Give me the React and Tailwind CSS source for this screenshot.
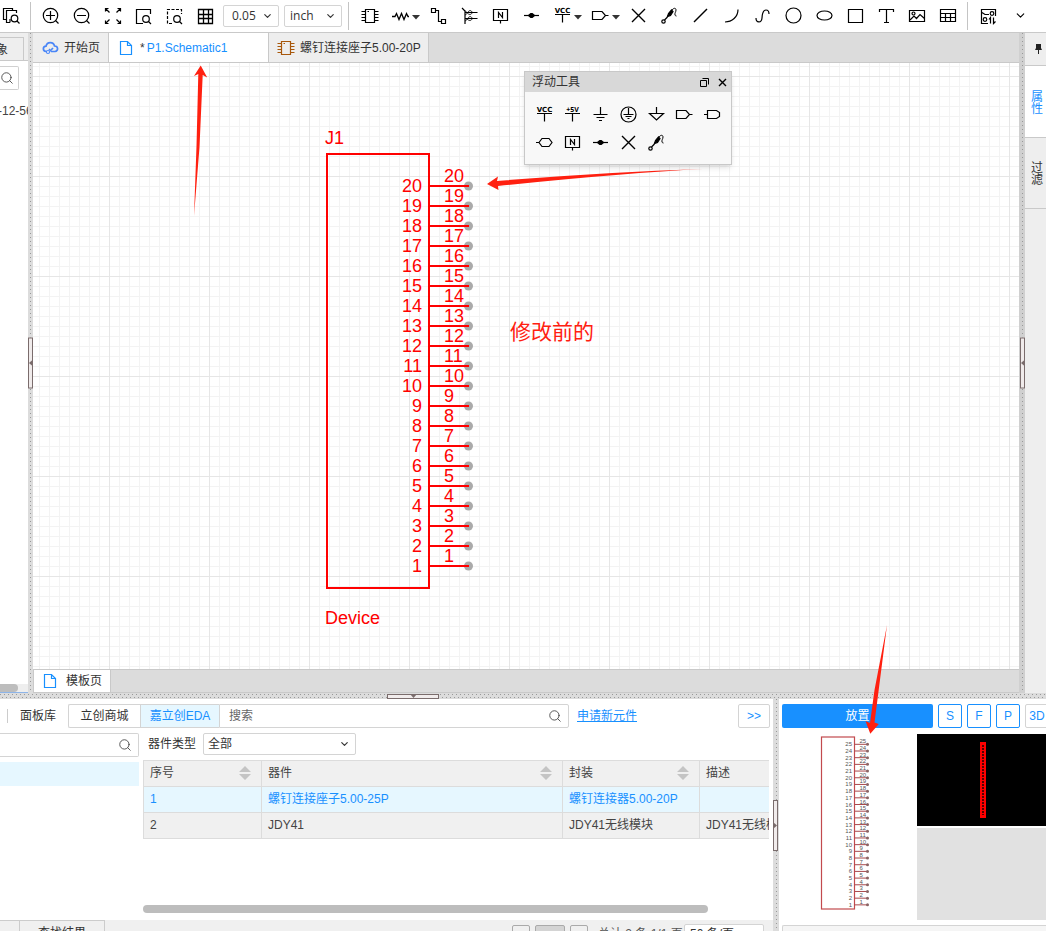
import { ChevronDown, Search } from 'lucide-react'

const DOTS_V = 'bg-[repeating-linear-gradient(to_bottom,#999_0_1px,transparent_1px_4px)] bg-[length:1px_100%] bg-center bg-no-repeat'
const DOTS_H = 'bg-[repeating-linear-gradient(to_right,#999_0_1px,transparent_1px_4px),repeating-linear-gradient(to_right,#999_0_1px,transparent_1px_4px)] bg-[length:100%_1px] bg-[position:0_1px,2px_4px] bg-no-repeat'

const Icon = ({ children, color = 'currentColor' }) => (
  <svg width="21" height="21" viewBox="0 0 21 21" fill="none" stroke={color} strokeWidth="1.2" className="shrink-0">
    {children}
  </svg>
)

const icons = {
  copySearch: (
    <>
      <path d="M5.500 14.500H2.500V3.500H11.500V5.500M9 17.500H5.500V5.500H15.500V8" />
      <circle cx="13.5" cy="13.500" r="3.300" />
      <path d="M16 16l2.500 2.500M9 14v3.500" />
    </>
  ),
  zoomIn: <><circle cx="10.5" cy="10.500" r="7.200" /><path d="M6 10.500h9M10.500 6v9M15.500 15.500l3 3" /></>,
  zoomOut: <><circle cx="10.5" cy="10.500" r="7.200" /><path d="M6 10.500h9M15.500 15.500l3 3" /></>,
  fit: (
    <path d="M3.500 6.500v-3h3M3.500 3.500l4 4M15.500 3.500h3v3M18.500 3.500l-4 4M3.500 15.500v3h3M3.500 18.500l4-4M15.500 18.500h3v-3M18.500 18.500l-4-4" />
  ),
  zoomRegion: (
    <>
      <path d="M8 18.500H3.500V4.500H17.500V9" />
      <circle cx="13" cy="14" r="3.300" />
      <path d="M15.500 16.500l2.500 2.500M8 18.500h2" />
    </>
  ),
  zoomSelect: (
    <>
      <path d="M8 18.500H3.500V4.500H17.500V9" strokeDasharray="3 1.500" />
      <circle cx="13" cy="14" r="3.300" />
      <path d="M15.500 16.500l2.500 2.500" />
    </>
  ),
  grid: <path d="M3.500 4.500h14v14h-14zM8.500 4v15M13.500 4v15M3 9.500h15M3 13.500h15" strokeWidth="1.300" />,
  chip: (
    <>
      <path d="M6.500 4.500h9v13h-9z" />
      <path d="M2.500 6.500h4M2.500 9.500h4M2.500 12.500h4M2.500 15.500h4M15.500 6.500h4M15.500 9.500h4M15.500 12.500h4M15.500 15.500h4" />
      <path d="M8.500 6.500h1.500" />
    </>
  ),
  resistor: <path d="M2 11.500h3l1.500-3 2.500 6 2.500-6 2.500 6 2.500-6 1.500 3h1" strokeWidth="1.300" />,
  wire: <path d="M3.500 3.500h4v4h-4zM13.500 14.500h4v4h-4zM7.500 5.500h3v11h3" />,
  bus: (
    <>
      <path d="M3 3l3 3v13M6 7.500h12.500M6 13.500h12.500" />
      <path d="M6 10c2 0 3-4.500 5-4.500 1.500 0 2 2 3 2-1 0-1.500 2-3 2-2 0-3-2-5-4M6 16c2 0 3-4.500 5-4.500 1.500 0 2 2 3 2-1 0-1.500 2-3 2-2 0-3-2-5-2" strokeWidth=".8" />
    </>
  ),
  netLabel: (
    <>
      <path d="M3.500 4.500h14v11h-14zM10.500 15.500v3" />
      <path d="M8.500 13V7.500l4 5V7" />
    </>
  ),
  junction: <><path d="M3 10.500h15" /><path d="M6.500 10.500l3-2.500h2l3 2.500-3 2.500h-2z" fill="currentColor" stroke="none" /></>,
  vcc: (
    <>
      <path d="M3 9.500h15M10.500 9.500v8" />
      <text x="10.500" y="7.500" textAnchor="middle" fontSize="7" fontWeight="700" fill="currentColor" stroke="none" className="font-['DejaVu_Sans']">VCC</text>
    </>
  ),
  fiveV: (
    <>
      <path d="M3 9.500h15M10.500 9.500v8" />
      <text x="10.500" y="7.500" textAnchor="middle" fontSize="7" fontWeight="700" fill="currentColor" stroke="none" className="font-['Open_Sans']">+5V</text>
    </>
  ),
  ground: <path d="M10.500 3v8M3.500 10.500h14M6.500 13.500h8M9 16.500h3" />,
  earth: <><circle cx="10.500" cy="10.500" r="7.500" /><path d="M10.500 4v6M5.500 10.500h10M7.500 12.500h6M9.500 14.500h2" /></>,
  gndArrow: <path d="M10.500 3v7M3.500 9.500h14l-7 6.500z" />,
  portOut: <path d="M2.500 6.500h9.500l3.500 4-3.500 4H2.500zM15.500 10.500h3" />,
  portIn: <path d="M5.500 6.500h9l3 2v4l-3 2h-9zM2 10.500h3.500" />,
  portBi: <path d="M2 10.500h3M5 10.500l3-4h7l3 4-3 4H8z" />,
  cross: <path d="M4 4l13 13M17 4L4 17" strokeWidth="1.400" />,
  probe: (
    <>
      <circle cx="4.500" cy="16.500" r="1.700" />
      <path d="M5.500 15l3-3" />
      <path d="M8.500 11.500l1-3 3-3.500 1.500 1.500-2.500 4z" fill="currentColor" />
      <path d="M13 5c2-2.500 4-2 4 0s-1.500 3-1 5c.5 1 1 1 1.500 1" strokeWidth="1" />
    </>
  ),
  line: <path d="M4 17L17 4" strokeWidth="1.500" />,
  arc: <path d="M4 17c7 0 13-5 13-12.500" />,
  spline: <path d="M4 13c0 5 5.500 5.500 6 0 0-3 1-8 4-8 2.500 0 3 2 3 4" />,
  circle: <circle cx="10.500" cy="10.500" r="7.500" />,
  ellipse: <ellipse cx="10.500" cy="10.500" rx="7.500" ry="4.500" />,
  rect: <path d="M3.500 4.500h14v13h-14z" />,
  text: <path d="M3.500 7V4.500h14V7M10.500 4.500v13M8 17.500h5" />,
  image: (
    <>
      <path d="M2.500 5.500h15v11h-15z" />
      <circle cx="6.500" cy="8.500" r="1.500" />
      <path d="M3 15l4-4 2.500 2.500L13 9.500l4.500 4" />
    </>
  ),
  table: <path d="M2.500 4.500h15v12h-15zM2.500 8.500h15M2.500 12.500h15M7.500 8.500v8M12.500 8.500v8" />,
  convert: (
    <>
      <path d="M10 18.500H3.500V4.500H17.500V11M4 7.500l3 2h4M3 18.500h7" />
      <circle cx="14" cy="8.500" r="1.800" />
      <circle cx="7" cy="14.500" r="1.800" />
      <path d="M12.500 18.500v-6l-1.500 2M15.500 12.500v6l2-2" />
    </>
  ),
}

const Caret = () => (
  <svg width="8" height="5" viewBox="0 0 8 5" className="mt-1 shrink-0"><path d="M0 0h8L4 4.500z" fill="#333" /></svg>
)

const Tool = ({ name, menu }) => (
  <button type="button" aria-label={name} className={menu ? 'flex h-[31px] w-[38px] items-center gap-px pl-[5px]' : 'flex h-[31px] w-[31px] items-center justify-center'}>
    <Icon>{icons[name]}</Icon>
    {menu && <Caret />}
  </button>
)

const Dropdown = ({ label, value, className, font = '' }) => (
  <div className={`relative shrink-0 ${className}`}>
    <select aria-label={label} id={label} defaultValue={value} className={`h-full w-full appearance-none rounded-xs border border-[#d4d4d4] bg-white text-[#333] outline-none ${font}`}>
      <option>{value}</option>
    </select>
    <ChevronDown size={11} strokeWidth={2.5} className="pointer-events-none absolute top-1/2 right-[6px] -translate-y-1/2 text-[#333]" />
  </div>
)

const FileIcon = () => (
  <svg width="14" height="16" viewBox="0 0 14 16" fill="none" stroke="#1890ff" strokeWidth="1.200" className="shrink-0">
    <path d="M1.500 1.500h7l4 4v9h-11zM8.500 1.500v4h4" />
  </svg>
)

const CloudIcon = () => (
  <svg width="17" height="14" viewBox="0 0 17 14" fill="none" stroke="#4a86f7" strokeWidth="1.700" className="shrink-0">
    <path d="M5 10.500H4C.5 10 .5 5.500 4 5.200 5 .500 11.500.500 12.500 5c4 0 4 5 .5 5.500H9.500L7 8" />
    <circle cx="6" cy="11" r="1.500" fill="#fff" strokeWidth="1.200" />
    <path d="M9 9l2-2" />
  </svg>
)

const Toolbar = () => (
  <header className="flex h-[33px] shrink-0 items-center overflow-hidden border-b border-[#c9c9c9] bg-white pb-px text-black">
    <div className="flex w-[22px] justify-center"><Icon>{icons.copySearch}</Icon></div>
    <i className="ml-2 h-7 w-px bg-[#c4c4c4]" />
    <div className="ml-1 flex shrink-0">
      {['zoomIn', 'zoomOut', 'fit', 'zoomRegion', 'zoomSelect', 'grid'].map((n) => <Tool key={n} name={n} />)}
    </div>
    <Dropdown label="grid-size" value="0.05" className="ml-[2px] h-[22px] w-14" font="pl-2 font-['Open_Sans'] text-xs" />
    <Dropdown label="unit" value="inch" className="ml-[5px] h-[22px] w-[58px]" font="pl-[5px] font-['Open_Sans'] text-xs" />
    <i className="ml-[6px] h-7 w-px bg-[#c4c4c4]" />
    <div className="ml-[5px] flex shrink-0">
      <Tool name="chip" />
      <Tool name="resistor" menu />
      {['wire', 'bus', 'netLabel', 'junction'].map((n) => <Tool key={n} name={n} />)}
      <Tool name="vcc" menu />
      <Tool name="portOut" menu />
      {['cross', 'probe', 'line', 'arc', 'spline', 'circle', 'ellipse', 'rect', 'text', 'image', 'table'].map((n) => <Tool key={n} name={n} />)}
    </div>
    <i className="ml-[3px] h-7 w-px bg-[#c4c4c4]" />
    <div className="ml-[5px] flex shrink-0 items-center">
      <Tool name="convert" />
      <button type="button" aria-label="more" className="flex w-8 justify-center"><ChevronDown size={13} strokeWidth={2} /></button>
    </div>
  </header>
)

const PINS = Array.from({ length: 20 }, (_, i) => 20 - i)
const PREVIEW_PINS = Array.from({ length: 25 }, (_, i) => 25 - i)

const Schematic = () => (
  <svg width="100%" height="100%" className="block">
    <defs>
      <pattern id="minor" x="6" y="3" width="10" height="10" patternUnits="userSpaceOnUse">
        <path d="M.5 0v10M0 .5h10" stroke="#f3f3f3" />
      </pattern>
      <pattern id="major" x="76" y="13" width="100" height="100" patternUnits="userSpaceOnUse">
        <path d="M.5 0v100M0 .5h100" stroke="#e6e6e6" />
      </pattern>
    </defs>
    <rect width="100%" height="100%" fill="url(#minor)" />
    <rect width="100%" height="100%" fill="url(#major)" />
    <g fill="#f00" fontSize="18">
      <text x="292" y="81">J1</text>
      <rect x="294" y="91" width="102" height="434" fill="none" stroke="#f00" strokeWidth="2" />
      {PINS.map((n, i) => {
        const y = 123 + i * 20
        return (
          <g key={n}>
            <circle cx="435.500" cy={y} r="4.500" fill="#aaa" />
            <path d={`M396 ${y}h40`} stroke="#f00" strokeWidth="2" />
            <text x="389" y={y + 6} textAnchor="end">{n}</text>
            <text x="411" y={y - 4}>{n}</text>
          </g>
        )
      })}
      <text x="292" y="561">Device</text>
      <text x="477" y="276" fontSize="21" fill="#ff2010">修改前的</text>
    </g>
    <g fill="#ff2010">
      <path d="M161 153l2.500-70 1.800-72-4.300 2 6.700-10.500 6.500 12-4.500-2.500-3.200 72z" />
      <path d="M670 106q-80 4-205 17l.5 4-11.500-6 11-7.500-1 4.500q110-9 206-12z" />
    </g>
  </svg>
)

const FloatingTools = () => (
  <section className="absolute top-2 left-[491px] flex h-[94px] w-52 flex-col border border-[#c8c8c8] bg-[#f8f8f8] text-black shadow-md">
    <div className="flex h-5 items-center bg-[#d8d8d8] pr-1 pl-[7px] text-[#333]">
      <span className="flex-1">浮动工具</span>
      <button type="button" aria-label="restore" className="mr-2 text-black">
        <svg width="11" height="11" viewBox="0 0 11 11" fill="none" stroke="currentColor" strokeWidth="1"><path d="M1.500 3.500h6v6h-6zM3.500 1.500h6v6" /></svg>
      </button>
      <button type="button" aria-label="close" className="text-black">
        <svg width="9" height="9" viewBox="0 0 9 9" stroke="currentColor" strokeWidth="1.400"><path d="M1 1l7 7M8 1L1 8" /></svg>
      </button>
    </div>
    <div className="grid grid-cols-[repeat(7,28px)] pt-2 pl-[5px]">
      {['vcc', 'fiveV', 'ground', 'earth', 'gndArrow', 'portOut', 'portIn', 'portBi', 'netLabel', 'junction', 'cross', 'probe'].map((n) => (
        <button key={n} type="button" aria-label={n} className="flex h-7 items-start pt-1 pl-1"><Icon>{icons[n]}</Icon></button>
      ))}
    </div>
  </section>
)

const LeftPanel = () => (
  <aside className="flex w-7 shrink-0 flex-col overflow-hidden bg-white">
    <div className="h-7 shrink-0 border-b border-[#c9c9c9] bg-[#eee] pt-1">
      <button type="button" className="flex h-6 w-6 items-center justify-end border-t border-r border-[#c9c9c9] pr-[15px]">象</button>
    </div>
    <div className="mt-[5px] flex h-6 w-[19px] shrink-0 items-center rounded-r-xs border border-l-0 border-[#d0d0d0]">
      <input aria-label="筛选" className="h-full w-0" />
      <Search size={14} strokeWidth={1.5} className="shrink-0 text-[#444]" />
    </div>
    <p className="mt-[13px] -ml-[2px] flex-1 whitespace-nowrap text-[#444]">-12-56</p>
    <div className="h-[9px] shrink-0 border-b border-[#8db4e8] bg-[#eee]"><div className="h-2 w-[18px] rounded-r-full bg-[#bdbdbd]" /></div>
  </aside>
)

const Handle = ({ dir, className }) => (
  <div className={`absolute flex items-center justify-center border border-[#7a6c6c] bg-[#f0ebeb] ${className}`}>
    <svg width="5" height="7" viewBox="0 0 5 7" className={dir === 'down' ? 'shrink-0 rotate-270' : dir === 'right' ? 'shrink-0 rotate-180' : 'shrink-0'}>
      <path d="M5 0v7L1 3.500z" fill="#7a6c6c" />
    </svg>
  </div>
)

const Workspace = () => (
  <main className="flex min-w-0 flex-1 flex-col">
    <nav className="flex h-[30px] shrink-0 border-b border-[#c9c9c9] bg-[#dcdcdc]">
      <button type="button" className="flex w-[76px] items-center gap-[5px] border-r border-[#c9c9c9] bg-[#eee] pl-[9px]"><CloudIcon />开始页</button>
      <button type="button" className="flex w-40 items-center gap-[7px] border-r border-[#c9c9c9] bg-white pl-[10px] text-[#1890ff]">
        <FileIcon />
        <span><span className="mr-[2px] text-[#333]">*</span>P1.Schematic1</span>
      </button>
      <button type="button" className="flex w-40 items-center gap-1 border-r border-[#c9c9c9] bg-[#eee] pl-[6px]">
        <Icon color="#a8580c">{icons.chip}</Icon>螺钉连接座子5.00-20P
      </button>
    </nav>
    <div className="relative min-h-0 flex-1 overflow-hidden bg-white">
      <div className="absolute inset-0"><Schematic /></div>
      <FloatingTools />
    </div>
    <div className="flex h-6 shrink-0 border-y border-[#c9c9c9] bg-[#dcdcdc]">
      <button type="button" className="flex w-[78px] items-center gap-[9px] border-x border-[#c9c9c9] bg-white pl-[9px]"><FileIcon />模板页</button>
    </div>
  </main>
)

const RightPanel = () => (
  <aside className="flex w-[21px] shrink-0 flex-col overflow-hidden bg-[#eee]">
    <button type="button" aria-label="pin" className="flex h-8 w-full items-center justify-end pr-1">
      <svg width="7" height="10" viewBox="0 0 7 10"><path d="M1 0h5v4l1 2H4v4H3V6H0l1-2z" fill="#222" /></svg>
    </button>
    <button type="button" className="flex h-[73px] w-full items-center justify-center border-t border-b border-[#c9c9c9] bg-white text-[#1890ff] [writing-mode:vertical-rl]">属性</button>
    <button type="button" className="flex h-[71px] w-full items-center justify-center border-b border-[#c9c9c9] [writing-mode:vertical-rl]">过滤</button>
  </aside>
)

const columns = [
  { label: '序号', width: 'w-[118px]' },
  { label: '器件', width: 'w-[301px]' },
  { label: '封装', width: 'w-[137px]' },
  { label: '描述', width: '' },
]

const rows = [
  ['1', '螺钉连接座子5.00-25P', '螺钉连接器5.00-20P', ''],
  ['2', 'JDY41', 'JDY41无线模块', 'JDY41无线模块'],
]

const PartsTable = () => (
  <table className="w-full table-fixed border-collapse text-left text-[#444]">
    <thead>
      <tr className="h-[26px] bg-[#f0f0f0]">
        {columns.map((c, i) => (
          <th key={c.label} className={`border border-r-0 border-[#dcdcdc] px-[6px] pt-0 pb-[2px] font-normal ${c.width}`}>
            <div className="flex items-center justify-between">
              {c.label}
              {i < 3 && <svg width="12" height="14" viewBox="0 0 12 14" className="mr-1"><path d="M6 0l6 6H0zM0 8h12l-6 6z" fill="#c4c4c4" /></svg>}
            </div>
          </th>
        ))}
      </tr>
    </thead>
    <tbody>
      {rows.map((row, r) => (
        <tr key={r} className={r === 0 ? 'h-[26px] bg-[#e6f7ff] text-[#1890ff]' : 'h-[26px] bg-[#f0f0f0]'}>
          {row.map((cell, i) => (
            <td key={i} className="overflow-hidden border border-r-0 border-[#dcdcdc] px-[6px] pt-0 pb-[2px] whitespace-nowrap">{cell}</td>
          ))}
        </tr>
      ))}
    </tbody>
  </table>
)

const Library = () => (
  <section className="flex min-w-0 flex-1 flex-col overflow-hidden bg-white">
    <div className="mt-[5px] flex h-6 shrink-0 items-center pr-[3px]">
      <i className="ml-[7px] h-[14px] w-px bg-[#ccc]" />
      <span className="ml-3 w-12">面板库</span>
      <button type="button" className="h-full w-[72px] rounded-l-xs border border-r-0 border-[#d4d4d4]">立创商城</button>
      <button type="button" className="h-full w-[79px] border-y border-l border-[#d4d4d4] bg-[#e6f7ff] text-[#1890ff]">嘉立创EDA</button>
      <div className="flex h-full w-[350px] items-center rounded-r-xs border border-[#d4d4d4] pr-[6px] pl-[9px]">
        <input aria-label="搜索" placeholder="搜索" className="min-w-0 flex-1 outline-none placeholder:text-[#666]" />
        <Search size={14} strokeWidth={1.5} className="text-[#444]" />
      </div>
      <a href="#new" className="ml-2 text-[#1890ff] underline">申请新元件</a>
      <button type="button" className="ml-auto h-full w-8 rounded-xs border border-[#d4d4d4] text-[#1890ff]">&gt;&gt;</button>
    </div>
    <div className="mt-[5px] flex min-h-0 flex-1">
      <div className="w-[139px] shrink-0">
        <div className="flex h-6 items-center rounded-r-xs border border-l-0 border-[#d4d4d4] pr-[6px]">
          <input aria-label="分类" className="min-w-0 flex-1 outline-none" />
          <Search size={14} strokeWidth={1.5} className="text-[#444]" />
        </div>
        <div className="mt-[5px] h-6 bg-[#e6f7ff]" />
      </div>
      <div className="flex min-w-0 flex-1 flex-col pr-1 pl-1">
        <div className="flex h-[22px] items-center pl-[5px]">
          <label htmlFor="part-type" className="mr-[7px]">器件类型</label>
          <Dropdown label="part-type" value="全部" className="h-[22px] w-[153px]" font="pl-1" />
        </div>
        <div className="mt-[5px] flex-1"><PartsTable /></div>
        <div className="mb-[7px] h-2 w-[565px] shrink-0 rounded-full bg-[#bdbdbd]" />
      </div>
    </div>
    <footer className="flex h-[11px] shrink-0 items-start overflow-hidden bg-[#f0f0f0]">
      <i className="h-6 w-5 border-t border-r border-[#ccc]" />
      <button type="button" className="h-6 w-[85px] shrink-0 border-t border-r border-[#ccc]">查找结果</button>
      <div className="ml-auto flex items-start pt-1 pr-[9px]">
        <button type="button" aria-label="first" className="mt-px h-5 w-[18px] rounded-xs border border-[#aaa] pl-1">
          <svg width="9" height="9" viewBox="0 0 9 9" fill="none" stroke="#999"><path d="M1.500 0v9M8 0L3.500 4.500 8 9" /></svg>
        </button>
        <button type="button" className="mt-px ml-[5px] h-5 w-[30px] rounded-xs border border-[#aaa] bg-[#d4d4d4] leading-5">1</button>
        <button type="button" aria-label="last" className="mt-px ml-[5px] h-5 w-[18px] rounded-xs border border-[#aaa] pl-1">
          <svg width="9" height="9" viewBox="0 0 9 9" fill="none" stroke="#999"><path d="M7.500 0v9M1 0l4.500 4.500L1 9" /></svg>
        </button>
        <span className="ml-[10px] w-[86px] leading-5 whitespace-nowrap text-[#555]">总计 2 条 1/1 页</span>
        <Dropdown label="page-size" value="50 条/页" className="h-5 w-20" font="pl-[5px]" />
      </div>
    </footer>
  </section>
)

const Preview = () => (
  <aside className="flex w-[267px] shrink-0 flex-col overflow-hidden bg-white pl-[3px]">
    <div className="mt-[5px] flex h-6 shrink-0 gap-[5px]">
      <button type="button" className="w-[151px] shrink-0 rounded-xs bg-[#1890ff] text-white">放置</button>
      {['S', 'F', 'P', '3D'].map((t) => (
        <button key={t} type="button" className={`w-6 shrink-0 rounded-xs border text-[#1890ff] ${t === '3D' ? 'border-[#d4d4d4]' : 'border-[#1890ff]'}`}>{t}</button>
      ))}
    </div>
    <div className="mt-[6px] flex h-[186px] shrink-0">
      <svg width="135" height="186" viewBox="0 0 135 186" fontSize="6" fill="#555" className="shrink-0">
        <rect x="39.500" y="3" width="33" height="172" fill="none" stroke="#c24a4e" strokeWidth="1.200" />
        {PREVIEW_PINS.map((n, i) => {
          const y = 10.300 + i * 6.690
          return (
            <g key={n}>
              <path d={`M72.500 ${y}h13`} stroke="#a8484c" />
              <circle cx="85.500" cy={y} r="1.500" fill="#8a6464" />
              <text x="70" y={y + 2} textAnchor="end">{n}</text>
              <text x="77.500" y={y - 1}>{n}</text>
            </g>
          )
        })}
      </svg>
      <div className="flex flex-1 flex-col gap-[2px]">
        <div className="flex-1 bg-black">
          <svg width="129" height="92" viewBox="0 0 129 92">
            <rect x="63" y="8" width="6" height="76" fill="#f00" />
            <path d="M66 11v70" stroke="#500" strokeWidth="2" strokeDasharray="2 1" />
          </svg>
        </div>
        <div className="flex-1 bg-[#e1e1e1]" />
      </div>
    </div>
    <div className="mt-[5px] h-6 rounded-tl-xs border-t border-l border-[#d4d4d4] bg-[#f5f5f5]" />
  </aside>
)

const App = () => (
  <div className="relative flex h-screen flex-col overflow-hidden bg-white font-['Liberation_Sans','Noto_Sans_CJK_SC',sans-serif] text-xs text-[#333]">
    <Toolbar />
    <div className="flex min-h-0 flex-1">
      <LeftPanel />
      <div className={`relative w-[5px] shrink-0 bg-[#dcdcdc] ${DOTS_V}`}>
        <Handle className="inset-x-0 top-1/2 h-[51px] -translate-y-1/2" />
      </div>
      <Workspace />
      <div className={`relative w-[6px] shrink-0 bg-[#d0d0d0] ${DOTS_V}`}>
        <Handle className="right-0 left-px top-1/2 h-[51px] -translate-y-1/2" />
      </div>
      <RightPanel />
    </div>
    <div className={`relative h-[6px] shrink-0 bg-[#dcdcdc] ${DOTS_H}`}>
      <Handle dir="down" className="top-px bottom-0 left-[387px] w-[52px]" />
    </div>
    <div className="flex h-[232px] shrink-0">
      <Library />
      <div className={`relative w-[6px] shrink-0 bg-[#dcdcdc] ${DOTS_V}`}>
        <Handle dir="right" className="right-px left-0 top-[101px] h-[51px]" />
      </div>
      <Preview />
    </div>
    {/* callout pointing at the symbol preview */}
    <svg width="24" height="110" viewBox="0 0 24 110" className="pointer-events-none absolute right-[157px] bottom-[197px]">
      <path d="M22 1L13.700 66 9.500 98.500 13.800 100 5.300 109.700.500 97 5 99 9.500 66z" fill="#ff2010" />
    </svg>
  </div>
)

export default App
